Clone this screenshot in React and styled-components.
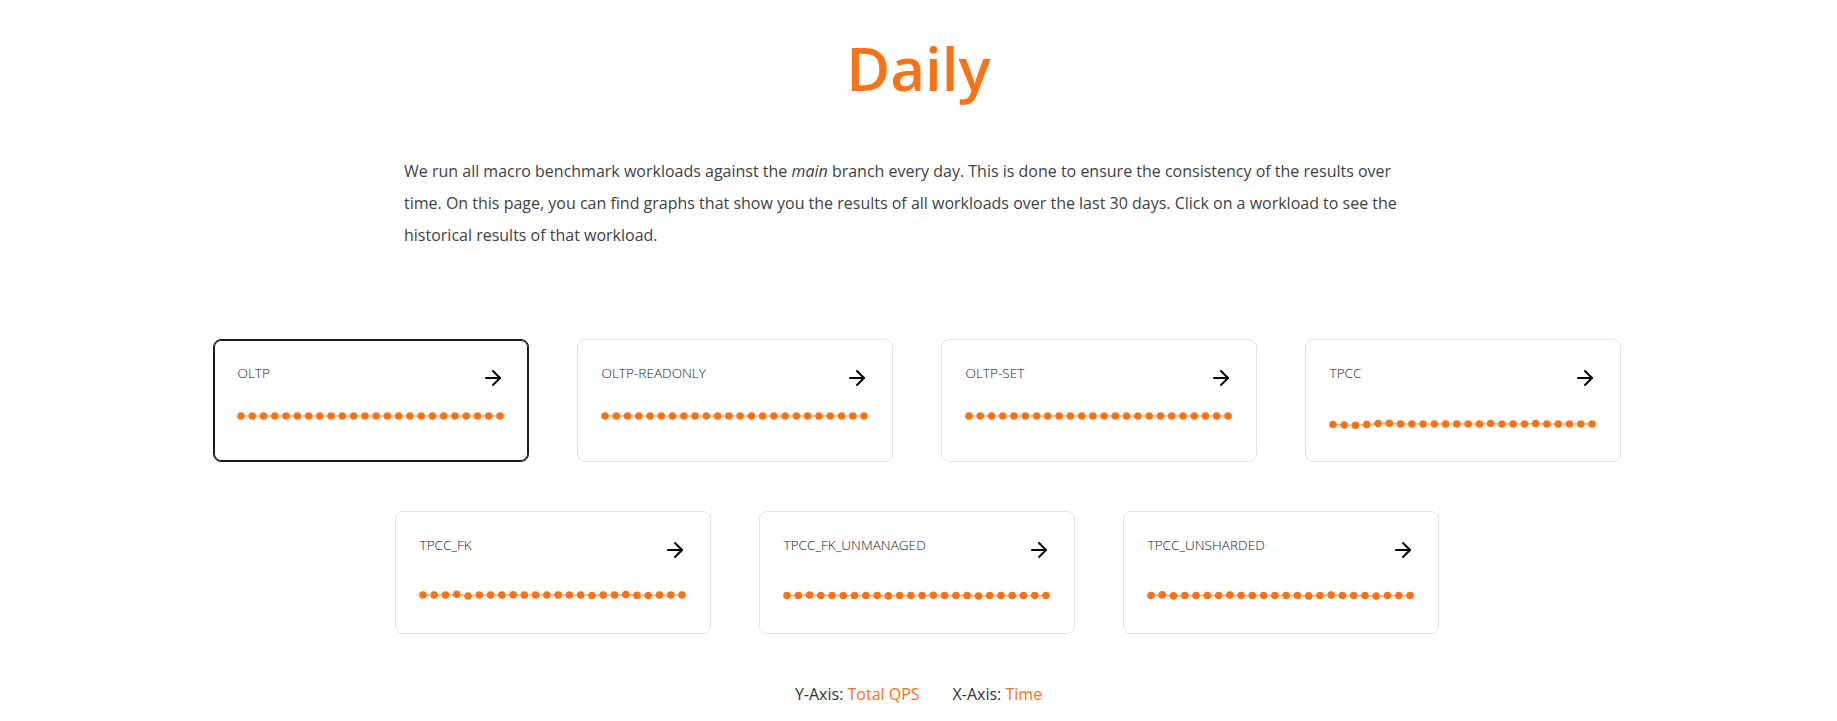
import React from 'react' ;
import styled, { createGlobalStyle } from 'styled-components' ;
import { ArrowRight } from 'lucide-react' ;

const ORANGE = '#f97316' ;

const GlobalStyle = createGlobalStyle`
    html, body {
        margin : 0 ;
        padding : 0 ;
        background : #ffffff ;
    }
    body {
        font-family : "Open Sans", "Noto Sans", sans-serif ;
        color : #333333 ;
    }
    * {
        box-sizing : border-box ;
    }
`;

const Page = styled.div`
    width : 100% ;
    padding-top : 42px ;
    display : flex ;
    flex-direction : column ;
    align-items : center ;
`;

const Title = styled.h1`
    margin : 0 ;
    font-size : 60px ;
    line-height : 52px ;
    font-weight : 600 ;
    color : ${ORANGE} ;
`;

const Intro = styled.p`
    width : 1029px ;
    margin : 61px 0 0 ;
    font-size : 16px ;
    line-height : 32px ;
    color : #3f3f3f ;
`;

const Grid = styled.div`
    width : 1408px ;
    margin : 88px 4px 0 0 ;
    display : flex ;
    flex-wrap : wrap ;
    justify-content : center ;
    column-gap : 48px ;
    row-gap : 49px ;
`;

const Card = styled.a`
    width : 316px ;
    height : 123px ;
    padding : 24px ;
    border : 1px solid ${props => props.$active ? '#1c1c1c' : '#e3e3e3'} ;
    box-shadow : ${props => props.$active ? 'inset 0 0 0 1px #1c1c1c' : 'none'} ;
    border-radius : 8px ;
    background : #ffffff ;
    display : flex ;
    flex-direction : column ;
    text-decoration : none ;
    cursor : pointer ;
`;

const CardHeader = styled.div`
    display : flex ;
    justify-content : space-between ;
    align-items : flex-start ;
    height : 26px ;
`;

const CardTitle = styled.span`
    font-size : 13.6px ;
    line-height : 18px ;
    font-weight : 300 ;
    color : #14181f ;
`;

const Arrow = styled(ArrowRight)`
    margin-top : 2px ;
    margin-right : -1px ;
    color : #000000 ;
`;

const Chart = styled.svg`
    display : block ;
    margin-top : 2px ;
    width : 266px ;
    height : 46px ;
    overflow : visible ;
`;

const Legend = styled.div`
    margin-top : 48px ;
    display : flex ;
    gap : 33px ;
    font-size : 16px ;
    line-height : 24px ;
    color : #333333 ;
`;

const Value = styled.span`
    color : ${ORANGE} ;
`;

const flat = (base, tweaks = {}) =>
    Array.from({ length : 24 }, (_, i) => base + (tweaks[i] || 0)) ;

const workloads = [
    { name : 'OLTP', points : flat(24), active : true },
    { name : 'OLTP-READONLY', points : flat(24) },
    { name : 'OLTP-SET', points : flat(24) },
    { name : 'TPCC', points : flat(32, { 0 : 0.5, 1 : 1, 2 : 1.2, 3 : 0.6, 4 : -0.4, 5 : -0.6, 14 : -0.5, 18 : -0.4 }) },
    { name : 'TPCC_FK', points : flat(31, { 3 : -0.8, 4 : 1, 8 : -0.3, 15 : 0.6, 18 : -0.4, 19 : 0.4, 20 : 0.6 }) },
    { name : 'TPCC_FK_UNMANAGED', points : flat(31.5, { 2 : -0.5, 9 : 0.4, 13 : -0.3, 17 : 0.5 }) },
    { name : 'TPCC_UNSHARDED', points : flat(31.5, { 1 : -0.6, 2 : 0.4, 7 : -0.4, 14 : 0.4, 16 : -0.5, 20 : 0.6 }) },
] ;

const Sparkline = ({ points }) => {
    const step = (262 - 3) / (points.length - 1) ;
    const coords = points.map((y, i) => [3 + i * step, y]) ;

    return (
        <Chart viewBox="0 0 266 46">
            <polyline
                points={coords.map(c => c.join(',')).join(' ')}
                fill="none"
                stroke={ORANGE}
                strokeOpacity="0.6"
                strokeWidth="1.6"
            />
            { coords.map(([x, y], i) => (
                <circle key={i} cx={x} cy={y} r="3.8" fill={ORANGE} />
            ))}
        </Chart>
    ) ;
} ;

const App = () => {
    return (
        <>
            <GlobalStyle />
            <Page>
                <Title>Daily</Title>
                <Intro>
                    We run all macro benchmark workloads against the <em>main</em> branch every day.
                    This is done to ensure the consistency of the results over time. On this page,
                    you can find graphs that show you the results of all workloads over the last 30 days.
                    Click on a workload to see the historical results of that workload.
                </Intro>
                <Grid>
                    { workloads.map(w => (
                        <Card key={w.name} $active={w.active}>
                            <CardHeader>
                                <CardTitle>{ w.name }</CardTitle>
                                <Arrow size={24} strokeWidth={2} />
                            </CardHeader>
                            <Sparkline points={w.points} />
                        </Card>
                    ))}
                </Grid>
                <Legend>
                    <span>Y-Axis: <Value>Total QPS</Value></span>
                    <span>X-Axis: <Value>Time</Value></span>
                </Legend>
            </Page>
        </>
    ) ;
} ;

export default App ;
